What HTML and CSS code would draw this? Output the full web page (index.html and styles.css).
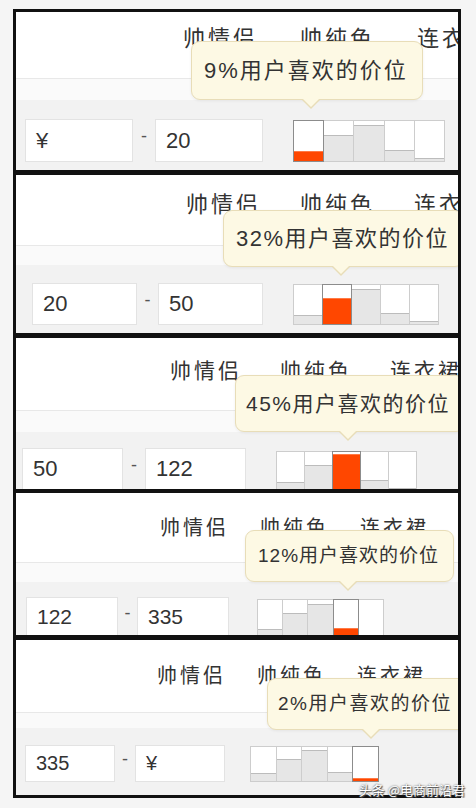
FILE: index.html
```html
<!DOCTYPE html>
<html lang="zh-CN">
<head>
    <meta charset="UTF-8">
    <meta name="viewport" content="width=device-width, initial-scale=1.0">
    <title>价格区间</title>
    <link rel="stylesheet" href="styles.css">
</head>
<body>
    <div class="sheet">
        <!-- 第一档 -->
        <section class="panel p1">
            <div class="tags"><span>帅情侣</span><span>帅纯色</span><span>连衣裙</span><span>卫衣</span></div>
            <div class="strip"></div>
            <div class="range">
                <div class="field">¥</div>
                <span class="dash">-</span>
                <div class="field">20</div>
                <div class="hist">
                    <div class="col on"><i style="height:24%"></i></div>
                    <div class="col"><i style="height:66%"></i></div>
                    <div class="col"><i style="height:90%"></i></div>
                    <div class="col"><i style="height:27%"></i></div>
                    <div class="col"><i style="height:7%"></i></div>
                </div>
            </div>
            <div class="tip">9%用户喜欢的价位</div>
        </section>

        <!-- 第二档 -->
        <section class="panel p2">
            <div class="tags"><span>帅情侣</span><span>帅纯色</span><span>连衣裙</span><span>卫衣</span></div>
            <div class="strip"></div>
            <div class="range">
                <div class="field">20</div>
                <span class="dash">-</span>
                <div class="field">50</div>
                <div class="hist">
                    <div class="col"><i style="height:24%"></i></div>
                    <div class="col on"><i style="height:66%"></i></div>
                    <div class="col"><i style="height:90%"></i></div>
                    <div class="col"><i style="height:27%"></i></div>
                    <div class="col"><i style="height:7%"></i></div>
                </div>
            </div>
            <div class="tip">32%用户喜欢的价位</div>
        </section>

        <!-- 第三档 -->
        <section class="panel p3">
            <div class="tags"><span>帅情侣</span><span>帅纯色</span><span>连衣裙</span><span>卫衣</span></div>
            <div class="strip"></div>
            <div class="range">
                <div class="field">50</div>
                <span class="dash">-</span>
                <div class="field">122</div>
                <div class="hist">
                    <div class="col"><i style="height:24%"></i></div>
                    <div class="col"><i style="height:66%"></i></div>
                    <div class="col on"><i style="height:95%"></i></div>
                    <div class="col"><i style="height:27%"></i></div>
                    <div class="col"><i style="height:7%"></i></div>
                </div>
            </div>
            <div class="tip">45%用户喜欢的价位</div>
        </section>

        <!-- 第四档 -->
        <section class="panel p4">
            <div class="tags"><span>帅情侣</span><span>帅纯色</span><span>连衣裙</span><span>卫衣</span></div>
            <div class="strip"></div>
            <div class="range">
                <div class="field">122</div>
                <span class="dash">-</span>
                <div class="field">335</div>
                <div class="hist">
                    <div class="col"><i style="height:24%"></i></div>
                    <div class="col"><i style="height:66%"></i></div>
                    <div class="col"><i style="height:90%"></i></div>
                    <div class="col on"><i style="height:27%"></i></div>
                    <div class="col"><i style="height:7%"></i></div>
                </div>
            </div>
            <div class="tip">12%用户喜欢的价位</div>
        </section>

        <!-- 第五档 -->
        <section class="panel p5">
            <div class="tags"><span>帅情侣</span><span>帅纯色</span><span>连衣裙</span><span>卫衣</span></div>
            <div class="strip"></div>
            <div class="range">
                <div class="field">335</div>
                <span class="dash">-</span>
                <div class="field">¥</div>
                <div class="hist">
                    <div class="col"><i style="height:24%"></i></div>
                    <div class="col"><i style="height:66%"></i></div>
                    <div class="col"><i style="height:90%"></i></div>
                    <div class="col"><i style="height:27%"></i></div>
                    <div class="col on"><i style="height:10%"></i></div>
                </div>
            </div>
            <div class="tip">2%用户喜欢的价位</div>
        </section>

        <div class="mark">头条 @电商前沿君</div>
    </div>
</body>
</html>
```

FILE: styles.css
```css
body {
    margin: 0;
    padding: 9px 0 0 13px;
    background: #f5f5f5;
    font-family: "Liberation Sans", "Noto Sans CJK SC", sans-serif;
    color: #333;
}

.sheet {
    position: relative;
    width: 448px;
}

/* 每一档截图 */
.panel {
    position: relative;
    box-sizing: border-box;
    height: var(--h);
    margin-top: var(--mt, 0);
    border: 3px solid #111;
    background: #fff;
    overflow: hidden;
    display: flex;
    flex-direction: column;
}

.tags {
    flex: none;
    box-sizing: border-box;
    height: var(--tags-h);
    padding: var(--tags-pt) 0 0 var(--tags-pl);
    display: flex;
    white-space: nowrap;
    font-family: "Noto Sans CJK SC", sans-serif;
    font-size: var(--tag-fs);
    letter-spacing: 3px;
    line-height: 1;
    color: #333;
}

.tags span {
    flex: none;
    width: var(--tag-w);
}

.strip {
    flex: none;
    box-sizing: border-box;
    height: var(--strip-h);
    border-top: 1px solid #e8e8e8;
    background: #fafafa;
}

.range {
    flex: 1;
    display: flex;
    align-items: flex-start;
    padding: var(--range-pt) 0 0 var(--range-pl);
    background: #f2f2f2;
}

.field {
    flex: none;
    box-sizing: border-box;
    width: var(--field-w);
    height: var(--field-h);
    padding-left: 10px;
    background: #fff;
    border: 1px solid #e3e3e3;
    font-size: var(--field-fs);
    line-height: calc(var(--field-h) - 2px);
    color: #333;
}

.dash {
    flex: none;
    width: var(--dash-w);
    text-align: center;
    font-size: 18px;
    line-height: calc(var(--field-h) - 8px);
    color: #555;
}

/* 价格分布柱 */
.hist {
    flex: none;
    display: flex;
    width: var(--hist-w);
    height: var(--hist-h);
    margin: var(--hist-mt) 0 0 var(--hist-gap);
}

.col {
    flex: 1;
    display: flex;
    flex-direction: column;
    justify-content: flex-end;
    background: #fff;
    border: 1px solid #cdcdcd;
    margin-left: -1px;
}

.col i {
    display: block;
    box-sizing: border-box;
    background: #e6e6e6;
    border-top: 1px solid #bcbcbc;
}

.col.on {
    position: relative;
    z-index: 1;
    border-color: #8c8c8c;
}

.col.on i {
    background: #ff4700;
    border-top-color: #ff7a45;
}

/* 气泡提示 */
.tip {
    position: absolute;
    left: var(--tip-l);
    top: var(--tip-t);
    box-sizing: border-box;
    height: var(--tip-h);
    padding: 0 14px 0 var(--tip-pl);
    background: #fdf9e4;
    border: 1px solid #e8ddb8;
    border-radius: 9px;
    box-shadow: 0 1px 3px rgba(0,0,0,0.06);
    font-size: var(--tip-fs);
    letter-spacing: var(--tip-ls);
    line-height: calc(var(--tip-h) - 2px);
    white-space: nowrap;
    color: #333;
}

.tip::before,
.tip::after {
    content: "";
    position: absolute;
    top: 100%;
    left: var(--arrow-x);
    border: 10px solid transparent;
    border-top-color: #e8ddb8;
    margin-left: -10px;
}

.tip::after {
    border-width: 9px;
    border-top-color: #fdf9e4;
    margin-left: -9px;
    margin-top: -1px;
}

.mark {
    position: absolute;
    right: -4px;
    bottom: 1px;
    font-family: "Noto Sans CJK SC", sans-serif;
    font-size: 13px;
    line-height: 15px;
    color: #fff;
    text-shadow: 0 0 2px #444, 1px 1px 1px #555;
}

.p1 {
    --h: 164px;
    --tags-h: 66px; --tags-pt: 13px; --tags-pl: 167px; --tag-w: 117px; --tag-fs: 22px;
    --strip-h: 22px;
    --range-pt: 19px; --range-pl: 9px;
    --field-w: 108px; --field-h: 43px; --field-fs: 22px; --dash-w: 22px;
    --hist-gap: 31px; --hist-w: 151px; --hist-h: 42px; --hist-mt: 1px;
    --tip-l: 175px; --tip-t: 29px; --tip-h: 59px; --tip-fs: 22px; --tip-ls: 2px; --tip-pl: 12px;
    --arrow-x: 119px;
}

.p2 {
    --mt: -1px; --h: 164px;
    --tags-h: 70px; --tags-pt: 16px; --tags-pl: 170px; --tag-w: 114px; --tag-fs: 22px;
    --strip-h: 20px;
    --range-pt: 18px; --range-pl: 16px;
    --field-w: 105px; --field-h: 42px; --field-fs: 22px; --dash-w: 21px;
    --hist-gap: 31px; --hist-w: 145px; --hist-h: 41px; --hist-mt: 1px;
    --tip-l: 207px; --tip-t: 35px; --tip-h: 57px; --tip-fs: 22px; --tip-ls: 1.5px; --tip-pl: 12px;
    --arrow-x: 117px;
}

.p3 {
    --mt: -1px; --h: 157px;
    --tags-h: 72px; --tags-pt: 21px; --tags-pl: 154px; --tag-w: 110px; --tag-fs: 21px;
    --strip-h: 22px;
    --range-pt: 16px; --range-pl: 6px;
    --field-w: 101px; --field-h: 42px; --field-fs: 22px; --dash-w: 22px;
    --hist-gap: 31px; --hist-w: 140px; --hist-h: 41px; --hist-mt: 3px;
    --tip-l: 219px; --tip-t: 37px; --tip-h: 57px; --tip-fs: 21px; --tip-ls: 1.5px; --tip-pl: 10px;
    --arrow-x: 112px;
}

.p4 {
    --mt: -2px; --h: 148px;
    --tags-h: 69px; --tags-pt: 24px; --tags-pl: 144px; --tag-w: 100px; --tag-fs: 20px;
    --strip-h: 20px;
    --range-pt: 15px; --range-pl: 10px;
    --field-w: 92px; --field-h: 40px; --field-fs: 21px; --dash-w: 19px;
    --hist-gap: 29px; --hist-w: 126px; --hist-h: 40px; --hist-mt: 2px;
    --tip-l: 229px; --tip-t: 37px; --tip-h: 52px; --tip-fs: 19px; --tip-ls: 1px; --tip-pl: 12px;
    --arrow-x: 102px;
}

.p5 {
    --mt: -1px; --h: 161px;
    --tags-h: 72px; --tags-pt: 25px; --tags-pl: 141px; --tag-w: 100px; --tag-fs: 20px;
    --strip-h: 16px;
    --range-pt: 17px; --range-pl: 9px;
    --field-w: 90px; --field-h: 37px; --field-fs: 20px; --dash-w: 20px;
    --hist-gap: 26px; --hist-w: 128px; --hist-h: 36px; --hist-mt: 1px;
    --tip-l: 251px; --tip-t: 38px; --tip-h: 52px; --tip-fs: 19px; --tip-ls: 1.5px; --tip-pl: 10px;
    --arrow-x: 103px;
}
```
